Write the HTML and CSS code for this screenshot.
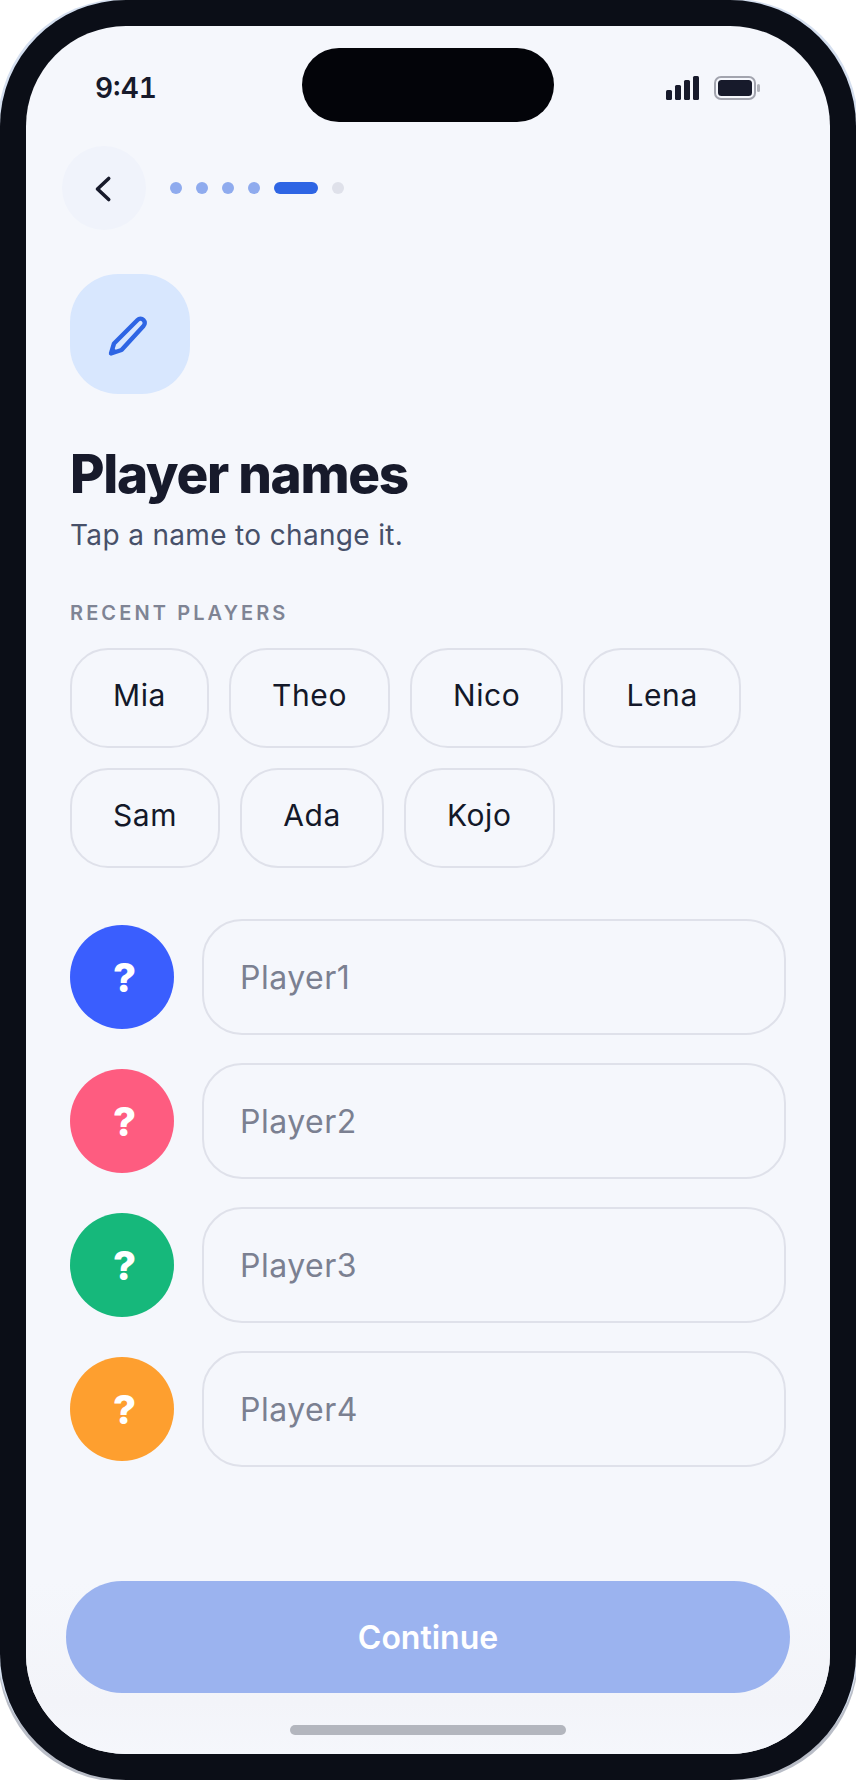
FILE: index.html
```html
<!DOCTYPE html>
<html lang="en">
<head>
<meta charset="utf-8">
<title>Player names</title>
<link rel="stylesheet" href="styles.css">
</head>
<body>
<div class="device">
  <div class="screen">
    <div class="island"></div>
    <header class="status">
      <span class="time">9:41</span>
      <div class="status-icons">
        <svg class="signal" width="33" height="24" viewBox="0 0 33 24"><rect x="0" y="14" width="6" height="10" rx="1.5"/><rect x="9" y="9" width="6" height="15" rx="1.5"/><rect x="18" y="4" width="6" height="20" rx="1.5"/><rect x="27" y="0" width="6" height="24" rx="1.5"/></svg>
        <svg class="battery" width="46" height="24" viewBox="0 0 46 24"><rect x="1" y="1" width="40" height="22" rx="6" fill="none" stroke="#a2a4ae" stroke-width="2"/><rect x="4" y="4" width="34" height="16" rx="3.5" fill="#171a2b"/><rect x="43" y="8" width="3" height="8" rx="1.5" fill="#b0b2ba"/></svg>
      </div>
    </header>

    <nav class="steps">
      <button class="back" type="button" aria-label="Back">
        <svg width="32" height="32" viewBox="0 0 32 32"><path d="M20.700 6.500 L9.500 17 L20.700 27.500" fill="none" stroke="#171a2b" stroke-width="3.600" stroke-linecap="round" stroke-linejoin="round"/></svg>
      </button>
      <div class="dots">
        <i class="dot done"></i><i class="dot done"></i><i class="dot done"></i><i class="dot done"></i>
        <i class="dot current"></i><i class="dot"></i>
      </div>
    </nav>

    <main class="content">
      <div class="tile">
        <svg width="48" height="48" viewBox="-1 -0.500 48 48"><path d="M30.500 9.500 L7 33 L4 43 L14.500 39.500 L36.500 15.500 A4.200 4.200 0 0 0 30.500 9.500 Z" fill="none" stroke="#2e65e4" stroke-width="4.400" stroke-linejoin="round"/><path d="M4 43 L5.500 37 L10 41 Z" fill="#2e65e4" stroke="#2e65e4" stroke-linejoin="round"/></svg>
      </div>
      <h1>Player names</h1>
      <p class="sub">Tap a name to change it.</p>
      <h2>RECENT PLAYERS</h2>
      <div class="chips">
        <button class="chip" type="button">Mia</button>
        <button class="chip" type="button">Theo</button>
        <button class="chip" type="button">Nico</button>
        <button class="chip" type="button">Lena</button>
        <button class="chip" type="button">Sam</button>
        <button class="chip" type="button">Ada</button>
        <button class="chip" type="button">Kojo</button>
      </div>
      <div class="players">
        <div class="player"><span class="avatar blue">?</span><div class="field">Player1</div></div>
        <div class="player"><span class="avatar pink">?</span><div class="field">Player2</div></div>
        <div class="player"><span class="avatar green">?</span><div class="field">Player3</div></div>
        <div class="player"><span class="avatar orange">?</span><div class="field">Player4</div></div>
      </div>
    </main>

    <footer class="footer">
      <button class="continue" type="button">Continue</button>
      <div class="home"></div>
    </footer>
  </div>
</div>
</body>
</html>
```
FILE: styles.css
```css
* { box-sizing: border-box; }

html, body {
  margin: 0;
  width: 856px;
  height: 1780px;
  overflow: hidden;
  background: #fff;
}

body {
  font-family: Inter, "Noto Sans", sans-serif;
  color: #171a2b;
}

button {
  font: inherit;
  color: inherit;
  background: none;
  padding: 0;
  border: 0;
}

.device {
  width: 856px;
  height: 1780px;
  padding: 26px;
  background: #0b0e17;
  border-radius: 126px;
  box-shadow: 3px -2px 0 -1px #d5dfef, -3px -2px 0 -1px #d5dfef, 3px 3px 0 -1px #b9bdc7, -3px 3px 0 -1px #b9bdc7;
}

.screen {
  position: relative;
  height: 100%;
  display: flex;
  flex-direction: column;
  background: #f5f7fc;
  border-radius: 100px;
  overflow: hidden;
}

.island {
  position: absolute;
  top: 22px;
  left: 276px;
  width: 252px;
  height: 74px;
  border-radius: 37px;
  background: #030409;
}

.status {
  display: flex;
  justify-content: space-between;
  align-items: center;
  height: 24px;
  margin-top: 50px;
  padding: 0 70px 0 69px;
}

.time {
  font-size: 28px;
  font-weight: 600;
  font-variant-numeric: tabular-nums;
}

.status-icons {
  display: flex;
  gap: 15px;
  align-items: center;
}

.signal { fill: #171a2b; }

.steps {
  display: flex;
  align-items: center;
  gap: 24px;
  margin-top: 46px;
  padding-left: 36px;
}

.back {
  width: 84px;
  height: 84px;
  border-radius: 50%;
  background: #f0f3fb;
  display: flex;
  align-items: center;
  justify-content: center;
}

.dots {
  display: flex;
  gap: 14px;
}

.dot {
  display: block;
  width: 12px;
  height: 12px;
  border-radius: 6px;
  background: #dfe1ea;
}

.dot.done { background: #8fabee; }

.dot.current {
  width: 44px;
  background: #2e65e4;
}

.content {
  padding: 44px 44px 0;
}

.tile {
  width: 120px;
  height: 120px;
  border-radius: 48px;
  background: #d8e7fe;
  display: flex;
  align-items: center;
  justify-content: center;
}

h1 {
  margin: 48px 0 0;
  font-size: 53px;
  line-height: 64px;
  font-weight: 800;
  letter-spacing: -1.3px;
}

.sub {
  margin: 9px 0 0;
  font-size: 28px;
  line-height: 40px;
  letter-spacing: 0.34px;
  color: #475069;
}

h2 {
  margin: 44px 0 0;
  font-size: 20px;
  line-height: 28px;
  font-weight: 600;
  letter-spacing: 3.1px;
  color: #7f8494;
}

.chips {
  display: flex;
  flex-wrap: wrap;
  gap: 20px;
  margin-top: 21px;
}

.chip {
  height: 100px;
  padding: 0 41px 6px;
  border: 2px solid #dfe1ea;
  border-radius: 38px;
  font-size: 30px;
  font-weight: 400;
  letter-spacing: 0.6px;
  color: #131829;
}

.players {
  display: flex;
  flex-direction: column;
  gap: 28px;
  margin-top: 51px;
}

.player {
  display: flex;
  align-items: center;
  gap: 28px;
}

.avatar {
  flex: none;
  width: 104px;
  height: 104px;
  padding-left: 5px;
  border-radius: 50%;
  display: flex;
  align-items: center;
  justify-content: center;
  color: #fff;
  font-size: 40px;
  font-weight: 800;
}

.blue { background: #3a5efe; }
.pink { background: #fe5c80; }
.green { background: #16b87b; }
.orange { background: #fe9f2f; }

.field {
  flex: 1;
  height: 116px;
  display: flex;
  align-items: center;
  padding: 0 36px;
  border: 2px solid #dfe1ea;
  border-radius: 40px;
  font-size: 32px;
  letter-spacing: 0.5px;
  color: #7b8091;
}

.footer {
  margin-top: auto;
  padding: 0 40px 19px;
  display: flex;
  flex-direction: column;
  align-items: center;
  background: linear-gradient(#f5f7fc, #f3f4f9 70%, #f5f7fc);
}

.continue {
  width: 100%;
  height: 112px;
  border-radius: 56px;
  background: #9bb3ef;
  color: #fff;
  font-size: 32px;
  font-weight: 600;
}

.home {
  width: 276px;
  height: 10px;
  margin-top: 32px;
  border-radius: 5px;
  background: #b3b6be;
}
```
